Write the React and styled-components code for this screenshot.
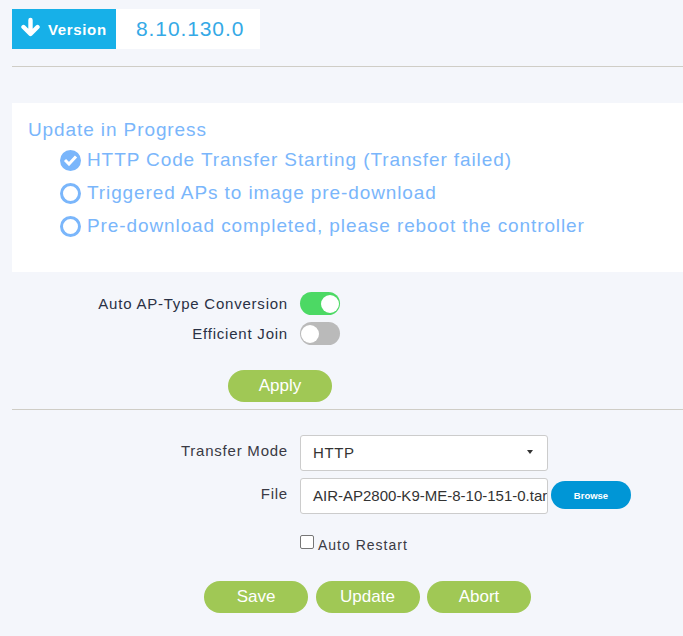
import * as React from "react";
import styled, { createGlobalStyle } from "styled-components";

const GlobalStyle = createGlobalStyle`
  html, body {
    margin: 0;
    background: #f4f6fb;
  }
  body {
    font-family: "Liberation Sans", Arial, sans-serif;
    overflow: hidden;
  }
`;

const Page = styled.div`
  width: 683px;
  height: 636px;
  padding: 9px 0 0 12px;
  box-sizing: border-box;
  overflow: hidden;
`;

const VersionRow = styled.div`
  display: flex;
  height: 40px;
`;

const VersionBadge = styled.div`
  width: 104px;
  display: flex;
  align-items: center;
  padding-left: 9px;
  box-sizing: border-box;
  background: #17b0e8;
  color: #fff;
  font-size: 15px;
  font-weight: bold;
  letter-spacing: 0.65px;
  svg {
    margin-right: 8px;
    margin-top: -4px;
  }
`;

const VersionValue = styled.div`
  width: 144px;
  padding-left: 20px;
  box-sizing: border-box;
  background: #fff;
  color: #35a9e6;
  font-size: 21px;
  letter-spacing: 0.9px;
  line-height: 40px;
`;

const Rule = styled.div`
  height: 1px;
  background: #cfcdc6;
  margin-top: ${(p) => p.$top}px;
`;

const ProgressPanel = styled.div`
  margin-top: 36px;
  height: 169px;
  padding: 16px 0 0 16px;
  box-sizing: border-box;
  background: #fff;
  color: #7ab6fb;
  font-size: 19px;
  letter-spacing: 0.9px;
`;

const ProgressTitle = styled.div`
  height: 22px;
  line-height: 22px;
`;

const StepList = styled.div`
  display: flex;
  flex-direction: column;
  gap: 11px;
  margin: 8px 0 0 32px;
`;

const Step = styled.div`
  display: flex;
  align-items: center;
  gap: 6px;
  height: 22px;
  white-space: nowrap;
`;

const Circle = styled.span`
  width: 21px;
  height: 21px;
  border-radius: 50%;
  box-sizing: border-box;
  border: 3px solid #7ab6fb;
  background: ${(p) => (p.$done ? "#7ab6fb" : "transparent")};
  display: flex;
  align-items: center;
  justify-content: center;
  flex: none;
`;

const ToggleRow = styled.div`
  display: flex;
  align-items: center;
  height: 23px;
  margin-top: ${(p) => p.$top}px;
`;

const FieldLabel = styled.div`
  width: 276px;
  text-align: right;
  color: #2a3145;
  font-size: 15px;
  letter-spacing: 0.78px;
  white-space: nowrap;
`;

const Toggle = styled.span`
  width: 40px;
  height: 23px;
  margin-left: 12px;
  padding: 1px;
  box-sizing: border-box;
  border-radius: 12px;
  background: ${(p) => (p.$on ? "#4cd964" : "#bababa")};
  display: flex;
  align-items: center;
  justify-content: ${(p) => (p.$on ? "flex-end" : "flex-start")};
  &::after {
    content: "";
    width: 18px;
    height: 18px;
    border-radius: 50%;
    background: #fff;
  }
`;

const PillButton = styled.button`
  width: 104px;
  height: 32px;
  padding: 0;
  border: none;
  border-radius: 16px;
  background: #a0c855;
  color: #fff;
  font-family: inherit;
  font-size: 17px;
`;

const ApplyRow = styled.div`
  margin: 25px 0 0 216px;
`;

const FormRow = styled.div`
  display: flex;
  margin-top: ${(p) => p.$top}px;
`;

const RowLabel = styled(FieldLabel)`
  padding-top: 7px;
  color: #3a3a44;
`;

const Field = styled.div`
  width: 248px;
  height: 36px;
  margin-left: 12px;
  box-sizing: border-box;
  display: flex;
  align-items: center;
  justify-content: space-between;
  background: #fff;
  border: 1px solid #ccc;
  border-radius: 3px;
  color: #333;
  font-size: 15px;
  letter-spacing: ${(p) => (p.$spaced ? "0.6px" : "0")};
  white-space: nowrap;
  overflow: hidden;
  padding: 0 0 2px 12px;
`;

const Caret = styled.span`
  width: 0;
  height: 0;
  margin-right: 14px;
  border-left: 3.5px solid transparent;
  border-right: 3.5px solid transparent;
  border-top: 4px solid #333;
`;

const BrowseButton = styled.button`
  width: 80px;
  height: 28px;
  margin: 3px 0 0 3px;
  padding: 0;
  border: none;
  border-radius: 14px;
  background: #0096d6;
  color: #fff;
  font-family: inherit;
  font-size: 9.5px;
  font-weight: bold;
`;

const CheckRow = styled.label`
  display: flex;
  align-items: flex-start;
  height: 18px;
  margin: 21px 0 0 288px;
  color: #3a3a44;
  font-size: 14px;
  letter-spacing: 1px;
  line-height: 20px;
`;

const CheckBox = styled.span`
  width: 14px;
  height: 14px;
  margin-right: 4px;
  box-sizing: border-box;
  background: #fff;
  border: 1px solid #767676;
  border-radius: 2px;
`;

const ActionRow = styled.div`
  display: flex;
  margin: 28px 0 0 192px;
  gap: 7.5px;
`;

export default function App() {
  return (
    <Page>
      <GlobalStyle />
      <VersionRow>
        <VersionBadge>
          <svg width="19" height="20" viewBox="0 0 19 20">
            <path
              d="M9.5 17 L2.5 10 M9.5 17 L16.5 10 M9.5 16 V3"
              fill="none"
              stroke="#fff"
              strokeWidth="4.4"
              strokeLinecap="round"
              strokeLinejoin="round"
            />
          </svg>
          Version
        </VersionBadge>
        <VersionValue>8.10.130.0</VersionValue>
      </VersionRow>
      <Rule $top={17} />
      <ProgressPanel>
        <ProgressTitle>Update in Progress</ProgressTitle>
        <StepList>
          <Step>
            <Circle $done>
              <svg width="15" height="12" viewBox="0 0 15 12">
                <path
                  d="M2 6 L6 10 L13 2.5"
                  fill="none"
                  stroke="#fff"
                  strokeWidth="3"
                />
              </svg>
            </Circle>
            HTTP Code Transfer Starting (Transfer failed)
          </Step>
          <Step>
            <Circle />
            Triggered APs to image pre-download
          </Step>
          <Step>
            <Circle />
            Pre-download completed, please reboot the controller
          </Step>
        </StepList>
      </ProgressPanel>
      <ToggleRow $top={20}>
        <FieldLabel>Auto AP-Type Conversion</FieldLabel>
        <Toggle $on />
      </ToggleRow>
      <ToggleRow $top={7}>
        <FieldLabel>Efficient Join</FieldLabel>
        <Toggle />
      </ToggleRow>
      <ApplyRow>
        <PillButton>Apply</PillButton>
      </ApplyRow>
      <Rule $top={7} />
      <FormRow $top={25}>
        <RowLabel>Transfer Mode</RowLabel>
        <Field $spaced>
          HTTP
          <Caret />
        </Field>
      </FormRow>
      <FormRow $top={7}>
        <RowLabel>File</RowLabel>
        <Field>AIR-AP2800-K9-ME-8-10-151-0.tar</Field>
        <BrowseButton>Browse</BrowseButton>
      </FormRow>
      <CheckRow>
        <CheckBox />
        Auto Restart
      </CheckRow>
      <ActionRow>
        <PillButton>Save</PillButton>
        <PillButton>Update</PillButton>
        <PillButton>Abort</PillButton>
      </ActionRow>
    </Page>
  );
}
